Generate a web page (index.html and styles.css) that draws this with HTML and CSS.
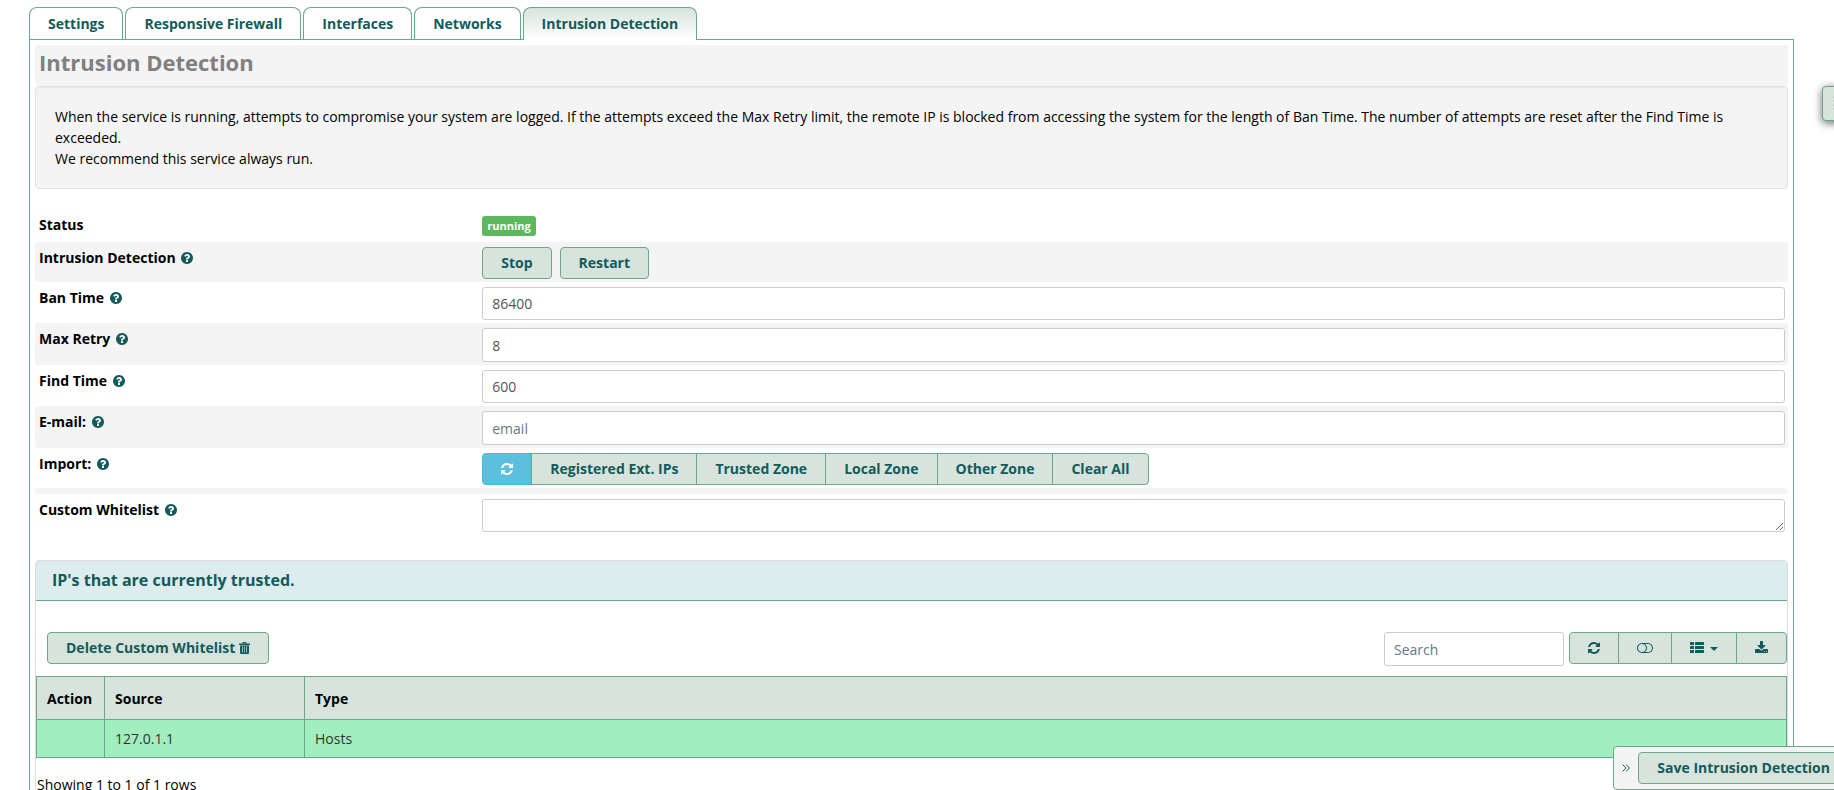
FILE: index.html
```html
<!DOCTYPE html>
<html lang="en">
<head>
<meta charset="utf-8">
<title>Intrusion Detection</title>
<link rel="stylesheet" href="styles.css">
</head>
<body>
<svg class="sprite" aria-hidden="true">
  <symbol id="help" viewBox="0 0 1536 1536"><path d="M896 1248v-192q0-14-9-23t-23-9H672q-14 0-23 9t-9 23v192q0 14 9 23t23 9h192q14 0 23-9t9-23zm256-672q0-88-55.500-163T958 297t-170-41q-243 0-371 213-15 24 8 42l132 100q7 6 19 6 16 0 25-12 53-68 86-92 34-24 86-24 48 0 85.500 26t37.500 59q0 38-20 61t-68 45q-63 28-115.500 86.500T640 892v36q0 14 9 23t23 9h192q14 0 23-9t9-23q0-19 21.500-49.500T972 829q32-18 49-28.500t46-35 44.500-48 28-60.500 12.500-81zm384 192q0 209-103 385.500T1153.500 1433 768 1536t-385.500-103T103 1153.500 0 768t103-385.500T382.500 103 768 0t385.500 103T1433 382.500 1536 768z"/></symbol>
  <symbol id="refresh" viewBox="0 0 1536 1536"><path d="M1511 928q0 5-1 7-64 268-268 434.500T764 1536q-146 0-282.500-55T238 1324l-129 129q-19 19-45 19t-45-19-19-45V960q0-26 19-45t45-19h448q26 0 45 19t19 45-19 45l-137 137q71 66 161 102t187 36q134 0 250-65t186-179q11-17 53-117 8-23 30-23h192q13 0 22.500 9.500t9.500 22.500zm25-800v448q0 26-19 45t-45 19h-448q-26 0-45-19t-19-45 19-45l138-138Q969 256 768 256q-134 0-250 65T332 500q-11 17-53 117-8 23-30 23H50q-13 0-22.500-9.500T18 608v-7q65-268 270-434.500T768 0q146 0 284 55.500T1297 212l130-129q19-19 45-19t45 19 19 45z"/></symbol>
  <symbol id="toggle" viewBox="0 0 2048 1280"><path d="M0 640q0-130 51-248.500T187.500 187.500t204-136.500T640 0h768q130 0 248.500 51t204 136.500 136.500 204 51 248.500-51 248.500-136.500 204-204 136.500-248.500 51H640q-130 0-248.500-51t-204-136.500T51 888.500 0 640zm1408 512q104 0 198.500-40.500T1770 1002t109.500-163.500T1920 640t-40.500-198.500T1770 278t-163.500-109.500T1408 128H983q137 96 217 230t80 282-80 282-217 230h425zM128 640q0 104 40.500 198.500T278 1002t163.500 109.500T640 1152t198.500-40.500T1002 1002t109.500-163.500T1152 640t-40.500-198.500T1002 278 838.500 168.500 640 128t-198.500 40.500T278 278 168.500 441.500 128 640z"/></symbol>
  <symbol id="list" viewBox="0 0 14 11"><path d="M.6 0h2.800q.6 0 .6.600v1.800q0 .6-.6.600H.6Q0 3 0 2.400V.6Q0 0 .6 0zM.6 4h2.800q.6 0 .6.600v1.800q0 .6-.6.600H.6Q0 7 0 6.400V4.600Q0 4 .6 4zM.6 8h2.800q.6 0 .6.600v1.800q0 .6-.6.600H.6Q0 11 0 10.400V8.600Q0 8 .6 8zM5.600 0h7.800q.6 0 .6.600v1.800q0 .6-.6.600H5.600Q5 3 5 2.400V.6Q5 0 5.600 0zM5.600 4h7.800q.6 0 .6.600v1.800q0 .6-.6.600H5.600Q5 7 5 6.400V4.600Q5 4 5.600 4zM5.600 8h7.800q.6 0 .6.600v1.800q0 .6-.6.600H5.600q-.6 0-.6-.6V8.600Q5 8 5.600 8z"/></symbol>
  <symbol id="caret" viewBox="0 0 8 4"><path d="M0 0h8L4 4z"/></symbol>
  <symbol id="download" viewBox="0 0 1664 1536"><path d="M1280 1344q0-26-19-45t-45-19-45 19-19 45 19 45 45 19 45-19 19-45zm256 0q0-26-19-45t-45-19-45 19-19 45 19 45 45 19 45-19 19-45zm128-224v320q0 40-28 68t-68 28H96q-40 0-68-28t-28-68v-320q0-40 28-68t68-28h465l135 136q58 56 136 56t136-56l136-136h464q40 0 68 28t28 68zm-325-569q17 41-14 70l-448 448q-18 19-45 19t-45-19L339 621q-31-29-14-70 17-39 59-39h256V64q0-26 19-45t45-19h256q26 0 45 19t19 45v448h256q42 0 59 39z"/></symbol>
  <symbol id="trash" viewBox="0 0 11 12"><path fill-rule="evenodd" d="M3.500 1.500V.8Q3.500 0 4.300 0h2.400q.8 0 .8.800v.7H11V3H0V1.500zM4.500 1v.5h2V1zM1 3.500h9v7.300q0 1.200-1.200 1.200H2.200Q1 12 1 10.800zM3 4.500v6h.7v-6zm2.200 0v6h.6v-6zm2.100 0v6H8v-6z"/></symbol>
</svg>

<nav class="tabs">
  <a class="tab" href="#settings">Settings</a>
  <a class="tab" href="#firewall">Responsive Firewall</a>
  <a class="tab" href="#interfaces">Interfaces</a>
  <a class="tab" href="#networks">Networks</a>
  <a class="tab tab--active" href="#intrusion">Intrusion Detection</a>
</nav>

<main class="content">
  <h1 class="heading">Intrusion Detection</h1>
  <div class="well">
    <p>When the service is running, attempts to compromise your system are logged. If the attempts exceed the Max Retry limit, the remote IP is blocked from accessing the system for the length of Ban Time. The number of attempts are reset after the Find Time is exceeded.</p>
    <p>We recommend this service always run.</p>
  </div>

  <form class="form">
    <div class="row row--status">
      <span class="label">Status</span>
      <div class="field"><span class="badge">running</span></div>
    </div>
    <div class="row row--striped">
      <span class="label">Intrusion Detection <svg class="help"><use href="#help"/></svg></span>
      <div class="field buttons">
        <button class="btn" type="button">Stop</button>
        <button class="btn" type="button">Restart</button>
      </div>
    </div>
    <div class="row">
      <label class="label" for="ban">Ban Time <svg class="help"><use href="#help"/></svg></label>
      <div class="field"><input class="input" id="ban" type="text" value="86400"></div>
    </div>
    <div class="row row--striped">
      <label class="label" for="retry">Max Retry <svg class="help"><use href="#help"/></svg></label>
      <div class="field"><input class="input" id="retry" type="text" value="8"></div>
    </div>
    <div class="row">
      <label class="label" for="find">Find Time <svg class="help"><use href="#help"/></svg></label>
      <div class="field"><input class="input" id="find" type="text" value="600"></div>
    </div>
    <div class="row row--striped">
      <label class="label" for="email">E-mail: <svg class="help"><use href="#help"/></svg></label>
      <div class="field"><input class="input" id="email" type="email" placeholder="email"></div>
    </div>
    <div class="row">
      <span class="label">Import: <svg class="help"><use href="#help"/></svg></span>
      <div class="field btn-group">
        <button class="btn btn--info" type="button" aria-label="Refresh"><svg class="icon"><use href="#refresh"/></svg></button>
        <button class="btn" type="button">Registered Ext. IPs</button>
        <button class="btn" type="button">Trusted Zone</button>
        <button class="btn" type="button">Local Zone</button>
        <button class="btn" type="button">Other Zone</button>
        <button class="btn" type="button">Clear All</button>
      </div>
    </div>
    <div class="divider"></div>
    <div class="row">
      <label class="label" for="whitelist">Custom Whitelist <svg class="help"><use href="#help"/></svg></label>
      <div class="field"><textarea class="input input--area" id="whitelist" rows="1"></textarea></div>
    </div>
  </form>

  <section class="panel">
    <h2 class="panel-title">IP's that are currently trusted.</h2>
    <div class="toolbar">
      <button class="btn" type="button">Delete Custom Whitelist <svg class="icon-trash"><use href="#trash"/></svg></button>
      <div class="tools">
        <input class="input input--search" type="search" placeholder="Search" aria-label="Search">
        <div class="btn-group">
          <button class="btn" type="button" aria-label="Refresh"><svg class="icon"><use href="#refresh"/></svg></button>
          <button class="btn" type="button" aria-label="Toggle view"><svg class="icon-toggle"><use href="#toggle"/></svg></button>
          <button class="btn" type="button" aria-label="Columns"><svg class="icon-list"><use href="#list"/></svg><svg class="icon-caret"><use href="#caret"/></svg></button>
          <button class="btn" type="button" aria-label="Export"><svg class="icon-download"><use href="#download"/></svg></button>
        </div>
      </div>
    </div>
    <table class="table">
      <thead><tr><th class="col-action">Action</th><th class="col-source">Source</th><th>Type</th></tr></thead>
      <tbody><tr><td></td><td>127.0.1.1</td><td>Hosts</td></tr></tbody>
    </table>
    <p class="summary">Showing 1 to 1 of 1 rows</p>
  </section>
</main>

<button class="side-toggle" type="button" aria-label="Open list"><span class="grip"></span></button>
<div class="action-bar">
  <a class="collapse" href="#collapse" aria-label="Collapse"><svg class="icon-collapse" viewBox="0 0 8 8"><path d="M.5.5 4 4 .5 7.500M4 .5 7.500 4 4 7.500"/></svg></a>
  <button class="btn" type="button">Save Intrusion Detection</button>
</div>
</body>
</html>
```
FILE: styles.css
```css
* { box-sizing: border-box; }

html { overflow: hidden; }

body {
  margin: 0;
  padding: 7px 40px 0 29px;
  background: #fff;
  color: #000;
  font: 14px/21px "Open Sans", sans-serif;
}

h1, h2, p { margin: 0; }

svg { fill: currentColor; }

.sprite { position: absolute; width: 0; height: 0; }

.tabs { display: flex; gap: 2px; }

.tab {
  padding: 5px 18px;
  border: 1px solid #6aa78b;
  border-bottom: 0;
  border-radius: 8px 8px 0 0;
  color: #125b5a;
  font-weight: 700;
  text-decoration: none;
}

.tab--active {
  position: relative;
  z-index: 1;
  margin-bottom: -1px;
  background: linear-gradient(#d7e4dd, #fff);
}

.content {
  min-height: 100vh;
  padding: 5px;
  border: 1px solid #6aa78b;
}

.heading {
  height: 41px;
  padding: 2px 4px;
  border-radius: 3px;
  background: #f4f4f4;
  color: #808080;
  font-size: 22px;
  line-height: 30px;
}

.well {
  padding: 19px;
  border: 1px solid #e3e3e3;
  border-radius: 4px;
  background: #f4f4f4;
  box-shadow: inset 0 1px 1px rgba(0, 0, 0, .05);
}

.form { padding-top: 20px; }

.row {
  display: grid;
  grid-template-columns: 1fr 3fr;
  padding: 5px 0 3px;
  border-radius: 3px;
}

.row--status { height: 33px; }

.row--striped { background: #f4f4f4; }

.label { padding-left: 4px; font-weight: 700; }

.help { width: 12px; height: 12px; margin-left: 2px; color: #125b5a; vertical-align: -1px; }

.field { padding: 0 3px 0 9px; }

.badge {
  display: block;
  width: max-content;
  margin-top: 2px;
  padding: 0 5px;
  border-radius: 3px;
  background: #5cb85c;
  color: #fff;
  font-size: 11px;
  line-height: 20px;
  font-weight: 700;
}

.buttons { display: flex; gap: 8px; }

.btn {
  height: 32px;
  padding: 0 18px;
  border: 1px solid #6aa78b;
  border-radius: 4px;
  background: #d7e4dd;
  color: #125b5a;
  font: inherit;
  font-weight: 700;
  line-height: 30px;
  white-space: nowrap;
}

.btn-group { display: flex; }

.btn-group .btn { border-radius: 0; }

.btn-group .btn + .btn { margin-left: -1px; }

.btn-group .btn:first-child { border-radius: 4px 0 0 4px; }

.btn-group .btn:last-child { border-radius: 0 4px 4px 0; }

.btn--info { border-color: #46b8da; background: #5bc0de; color: #fff; }

.icon { width: 12px; height: 12px; vertical-align: -1px; }
.icon-trash { width: 11px; height: 12px; vertical-align: -1px; }
.icon-toggle { width: 16px; height: 10px; }
.icon-list { width: 14px; height: 11px; vertical-align: 0; }
.icon-caret { width: 8px; height: 4px; margin-left: 6px; vertical-align: 2px; }
.icon-download { width: 13px; height: 12px; }

.input {
  display: block;
  width: 100%;
  height: 33px;
  padding: 0 9px;
  border: 1px solid #ccc;
  border-radius: 3px;
  background: #fff;
  color: #555;
  font: inherit;
}

.row--striped .input { height: 34px; }

.input::placeholder { color: #6c757d; opacity: 1; }

.input--area { min-height: 33px; resize: vertical; }

.divider { height: 6px; border-radius: 3px; background: #f4f4f4; }

.panel {
  margin-top: 25px;
  border: 1px solid #ddd;
  border-radius: 4px;
}

.panel-title {
  padding: 9px 16px;
  border-bottom: 1px solid #6aa78b;
  background: #ddecec;
  color: #125b5a;
  font-size: 16px;
  line-height: 21px;
}

.toolbar {
  display: flex;
  justify-content: space-between;
  padding: 31px 0 10px 11px;
}

.tools { display: flex; gap: 5px; }

.input--search { width: 180px; height: 34px; }

.table { width: 100%; border-collapse: collapse; }

.table th, .table td {
  height: 38px;
  padding: 0 10px;
  border: 1px solid #6aa78b;
  text-align: left;
}

.table th { height: 43px; background: #d7e4dd; }

.table td { background: #a1eebf; color: #333; }

.col-action { width: 68px; }
.col-source { width: 200px; }

.summary { padding: 16px 1px; }

.side-toggle {
  position: fixed;
  top: 86px;
  right: -38px;
  width: 50px;
  height: 35px;
  padding: 0 10px;
  border: 1px solid #6aa78b;
  border-radius: 4px;
  background: #d7e4dd;
  box-shadow: 0 2px 8px rgba(0, 0, 0, .6);
}

.grip {
  display: block;
  width: 28px;
  height: 16px;
  background: repeating-linear-gradient(#c3d0ca 0 2px, transparent 2px 4px);
}

.action-bar {
  position: fixed;
  right: -21px;
  bottom: 0;
  display: flex;
  align-items: center;
  padding: 5px;
  border: 1px solid #6aa78b;
  border-radius: 4px 0 0 4px;
  background: #f4f4f4;
}

.collapse { display: flex; padding: 0 8px 0 3px; color: #125b5a; }

.icon-collapse { width: 8px; height: 8px; fill: none; stroke: currentColor; }
```
